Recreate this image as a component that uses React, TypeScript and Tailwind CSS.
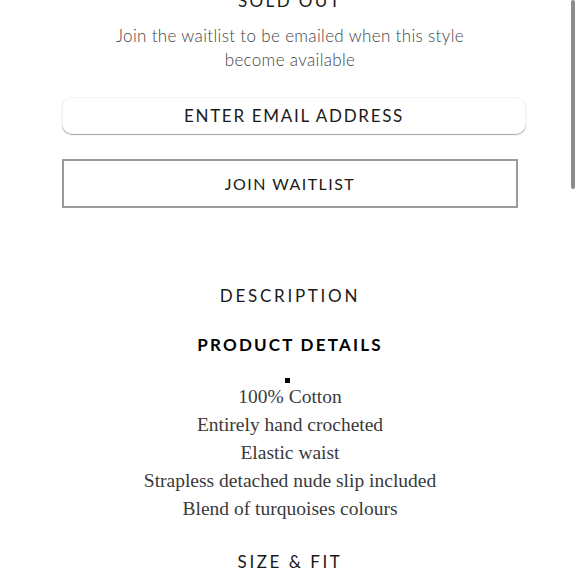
import React from "react";

const details = [
  "100% Cotton",
  "Entirely hand crocheted",
  "Elastic waist",
  "Strapless detached nude slip included",
  "Blend of turquoises colours",
];

const sans = "font-['Lato',sans-serif]";
const serif = "font-['Liberation_Serif',serif]";

const App: React.FC = () => {
  return (
    <div className="relative h-[580px] w-[580px] overflow-hidden bg-white">
      {/* overlay scrollbar */}
      <div className="absolute right-[5px] top-0 h-[189px] w-[4px] rounded-full bg-[#8c8c8c]" />

      <div className={`ml-[62px] flex w-[456px] flex-col items-center ${sans}`}>
        <p className="-mt-[11px] text-[17px] leading-[24px] tracking-[0.14em] text-[#1a1a1a]">
          SOLD OUT
        </p>
        <p className="mt-[11px] text-center text-[17px] font-light leading-[24px] tracking-[0.02em] text-[#444]">
          Join the waitlist to be emailed when this style
          <br />
          become available
        </p>

        <input
          type="email"
          placeholder="ENTER EMAIL ADDRESS"
          className="mt-[25px] h-[37px] w-[464px] self-start rounded-[10px] border border-[#f4f4f4] bg-white text-center text-[17px] tracking-[0.1em] text-[#1a1a1a] shadow-[0_1px_1px_rgba(0,0,0,0.35)] outline-none placeholder:text-[#1a1a1a]"
        />

        <button className="mt-[25px] h-[49px] w-[456px] border-2 border-[#9b9b9b] bg-white text-[16px] tracking-[0.09em] text-[#1a1a1a]">
          JOIN WAITLIST
        </button>

        <h2 className="mt-[76px] text-[17px] leading-[24px] tracking-[0.16em] text-[#1a1a1a]">
          DESCRIPTION
        </h2>

        <h3 className="mt-[25px] text-[17px] font-bold leading-[24px] tracking-[0.13em] text-black">
          PRODUCT DETAILS
        </h3>

        <div className="mr-[6px] mt-[21px] h-[5px] w-[5px] bg-black" />
        <ul className={`text-center text-[19.5px] leading-[28px] text-[#3a3a3a] ${serif}`}>
          {details.map((d) => (
            <li key={d}>{d}</li>
          ))}
        </ul>

        <h2 className="mt-[27px] text-[17px] leading-[24px] tracking-[0.15em] text-[#1a1a1a]">
          SIZE &amp; FIT
        </h2>
      </div>
    </div>
  );
};

export default App;
